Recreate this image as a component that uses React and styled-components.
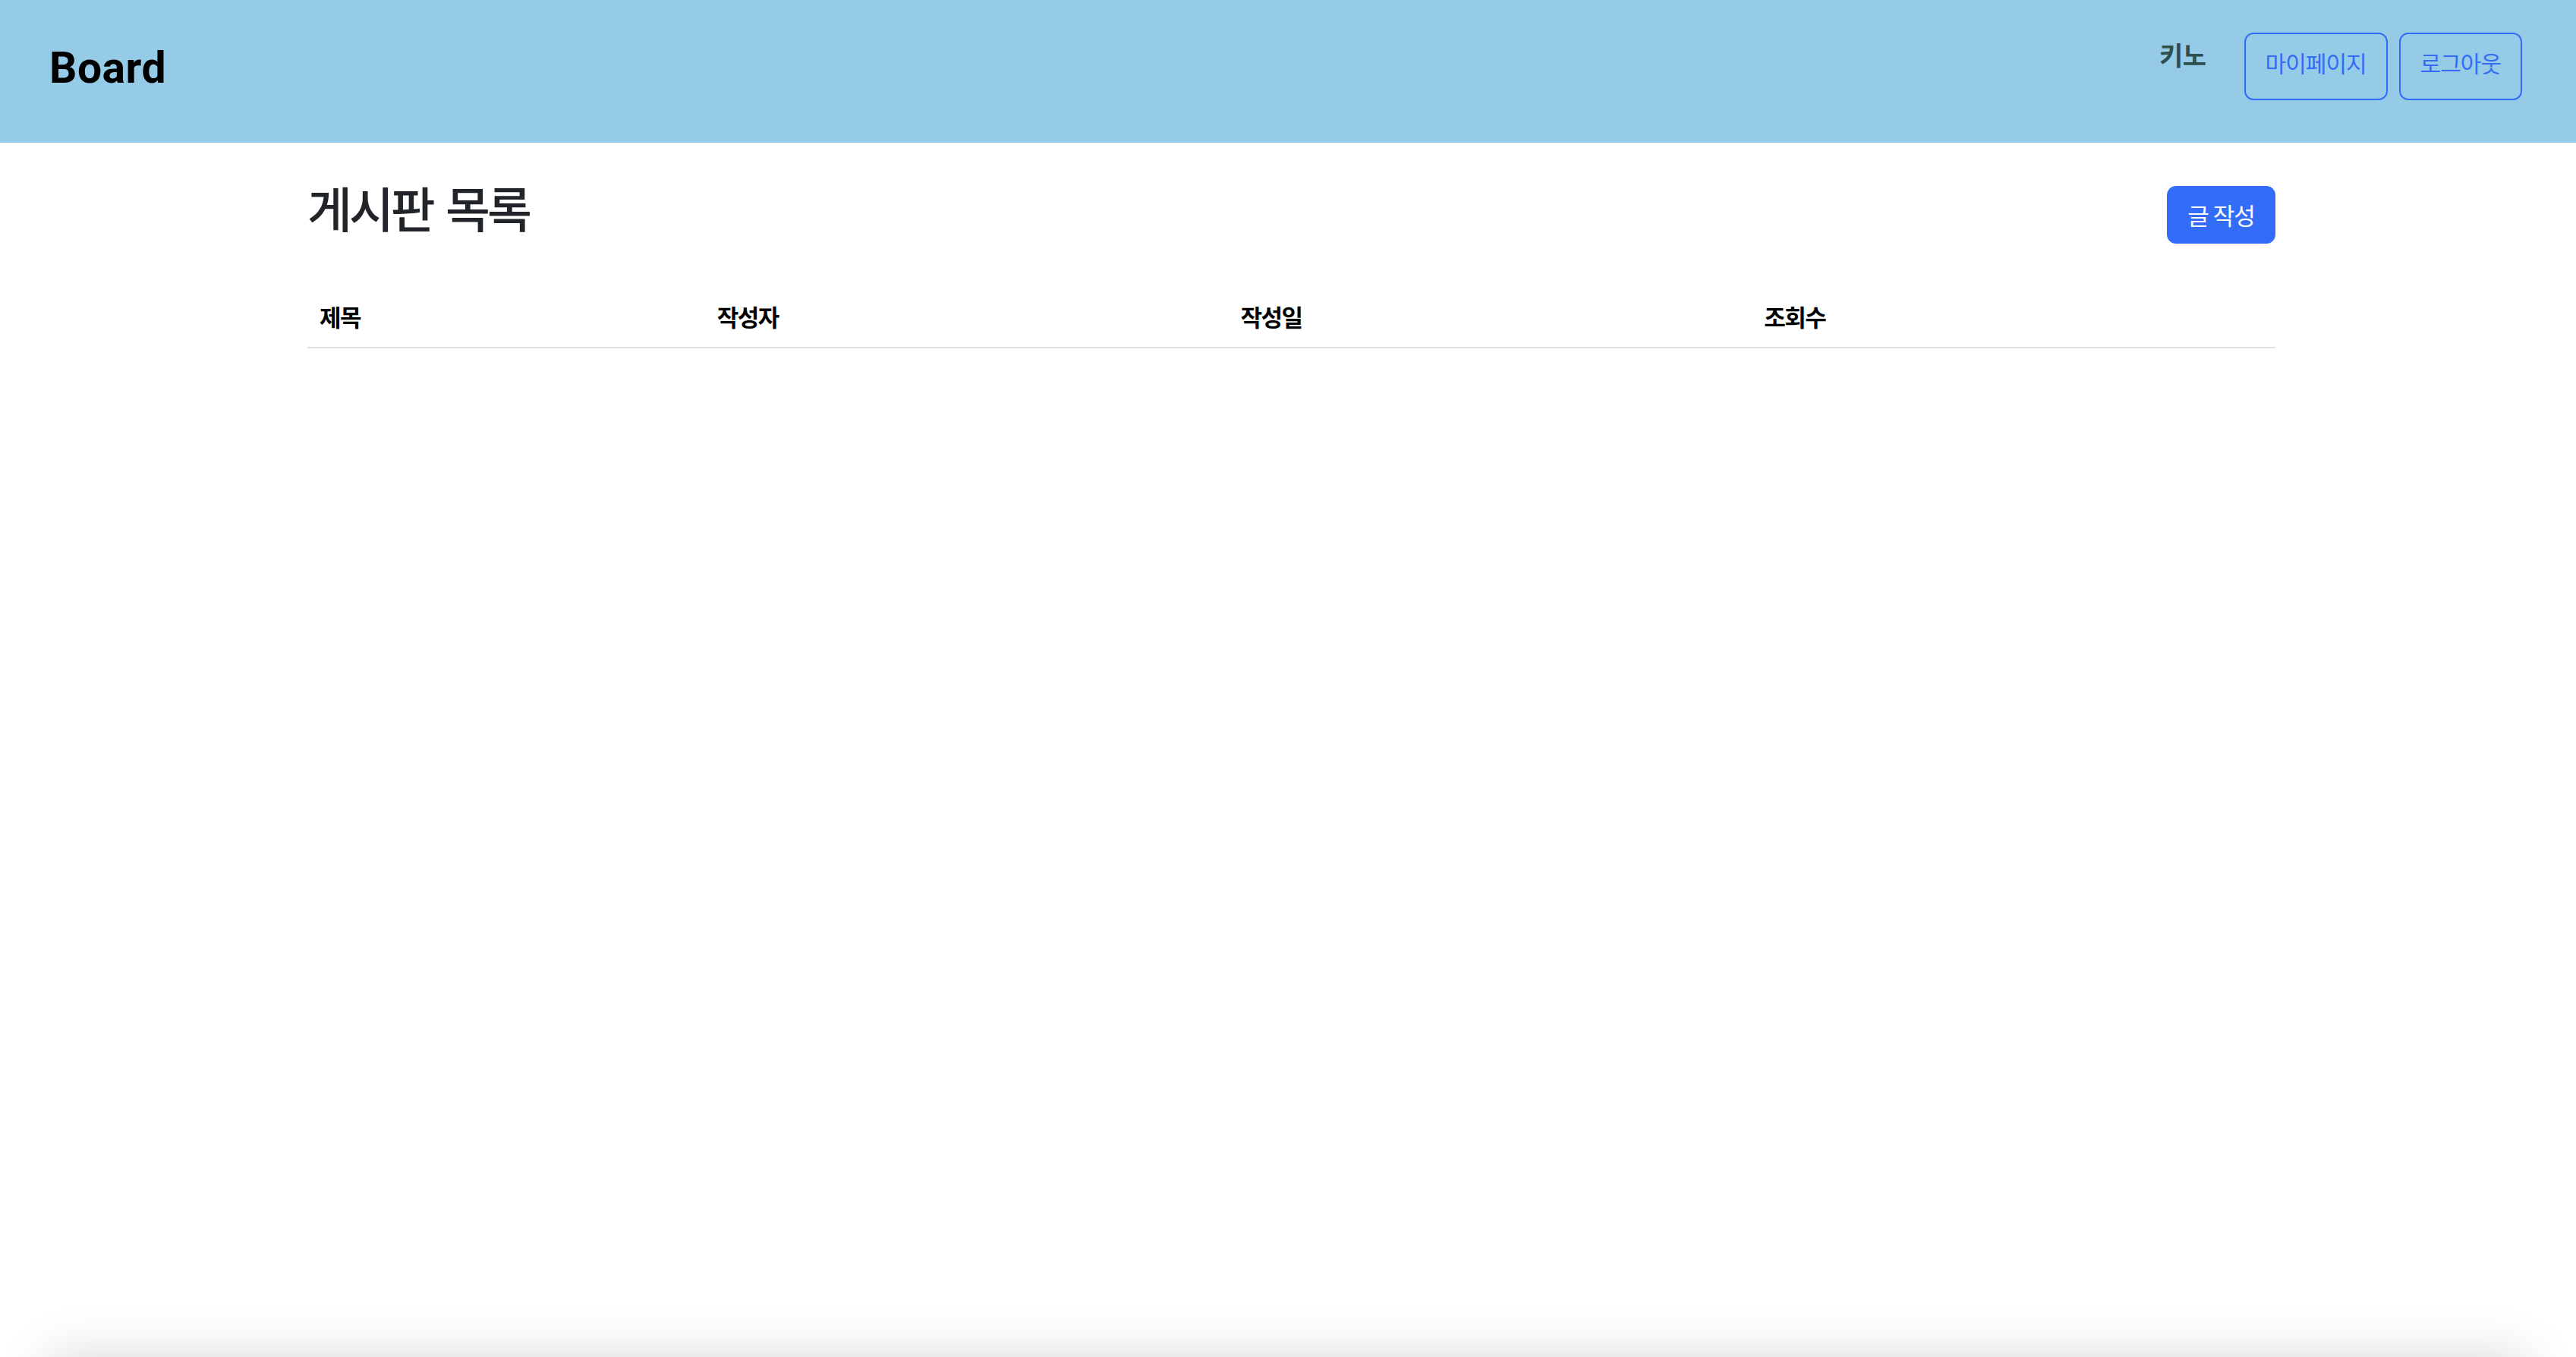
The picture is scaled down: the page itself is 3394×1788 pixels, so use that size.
import styled, { createGlobalStyle } from "styled-components";

const GlobalStyle = createGlobalStyle`
  * {
    box-sizing: border-box;
  }
  html,
  body {
    margin: 0;
    padding: 0;
    background: #fff;
  }
  body {
    font-family: Roboto, "Noto Sans CJK KR", sans-serif;
    font-size: 32px;
    line-height: 1.5;
    color: #212529;
  }
`;

const Page = styled.div`
  height: 100vh;
  overflow: hidden;
  display: flex;
  flex-direction: column;
`;

const Header = styled.header`
  flex: 0 0 188px;
  background-color: #96cbe8;
  display: flex;
  align-items: center;
  justify-content: space-between;
  padding: 0 71px 0 65px;
`;

const Brand = styled.h1`
  margin: 0 0 8px;
  font-family: Roboto, sans-serif;
  font-size: 57px;
  font-weight: 700;
  color: #000;
  letter-spacing: 0.5px;
`;

const UserArea = styled.div`
  display: flex;
  align-items: flex-start;
  align-self: flex-start;
  margin-top: 43px;
`;

const UserName = styled.span`
  font-family: "Noto Sans CJK KR", sans-serif;
  font-size: 34px;
  font-weight: 700;
  color: #2f4f4f;
  line-height: 1;
  margin-top: 12px;
  margin-right: 50px;
  letter-spacing: -0.5px;
`;

const OutlineButton = styled.button`
  font-family: "Noto Sans CJK KR", sans-serif;
  font-size: 30px;
  line-height: 48px;
  height: 89px;
  padding: 14px 26px 25px;
  margin-left: ${(p) => (p.$gap ? "15px" : "0")};
  color: #336cf6;
  background: transparent;
  border: 2px solid #336cf6;
  border-radius: 12px;
  letter-spacing: -1px;
  cursor: pointer;
  display: flex;
  align-items: center;
`;

const Main = styled.main`
  flex: 0 0 calc(100vh - 188px);
  width: 2593px;
  margin-left: calc(50% - 1292px);
  padding-top: 48px;
`;

const TitleRow = styled.div`
  display: flex;
  align-items: center;
  justify-content: space-between;
  margin-bottom: 48px;
`;

const Title = styled.h2`
  margin: 0 0 16px;
  font-family: "Noto Sans CJK KR", sans-serif;
  font-size: 64px;
  font-weight: 500;
  line-height: 73px;
  padding-bottom: 4px;
  letter-spacing: -4px;
  word-spacing: 7px;
  color: #212529;
`;

const PrimaryButton = styled.button`
  font-family: "Noto Sans CJK KR", sans-serif;
  font-size: 31px;
  height: 76px;
  width: 143px;
  padding: 0;
  color: #fff;
  background-color: #336cf6;
  border: none;
  border-radius: 12px;
  letter-spacing: -1px;
  cursor: pointer;
`;

const Table = styled.table`
  width: 100%;
  border-collapse: collapse;
  table-layout: fixed;
`;

const HeadCell = styled.th`
  width: ${(p) => p.$width};
  text-align: left;
  padding: 16px;
  font-family: "Noto Sans CJK KR", sans-serif;
  font-size: 31px;
  font-weight: 700;
  line-height: 48px;
  color: #000;
  letter-spacing: -1.5px;
  border-bottom: 2px solid #dee2e6;
`;

const Footer = styled.footer`
  flex: 0 0 120px;
  margin: 0 64px;
  background: #fff;
  box-shadow: 0 0 70px rgba(0, 0, 0, 0.16);
`;

const columns = [
  { label: "제목", width: "20.2%" },
  { label: "작성자", width: "26.6%" },
  { label: "작성일", width: "26.6%" },
  { label: "조회수", width: "26.6%" },
];

function App() {
  return (
    <>
      <GlobalStyle />
      <Page>
        <Header>
          <Brand>Board</Brand>
          <UserArea>
            <UserName>키노</UserName>
            <OutlineButton>마이페이지</OutlineButton>
            <OutlineButton $gap>로그아웃</OutlineButton>
          </UserArea>
        </Header>
        <Main>
          <TitleRow>
            <Title>게시판 목록</Title>
            <PrimaryButton>글 작성</PrimaryButton>
          </TitleRow>
          <Table>
            <thead>
              <tr>
                {columns.map((c) => (
                  <HeadCell key={c.label} $width={c.width}>
                    {c.label}
                  </HeadCell>
                ))}
              </tr>
            </thead>
            <tbody></tbody>
          </Table>
        </Main>
        <Footer />
      </Page>
    </>
  );
}

export default App;
